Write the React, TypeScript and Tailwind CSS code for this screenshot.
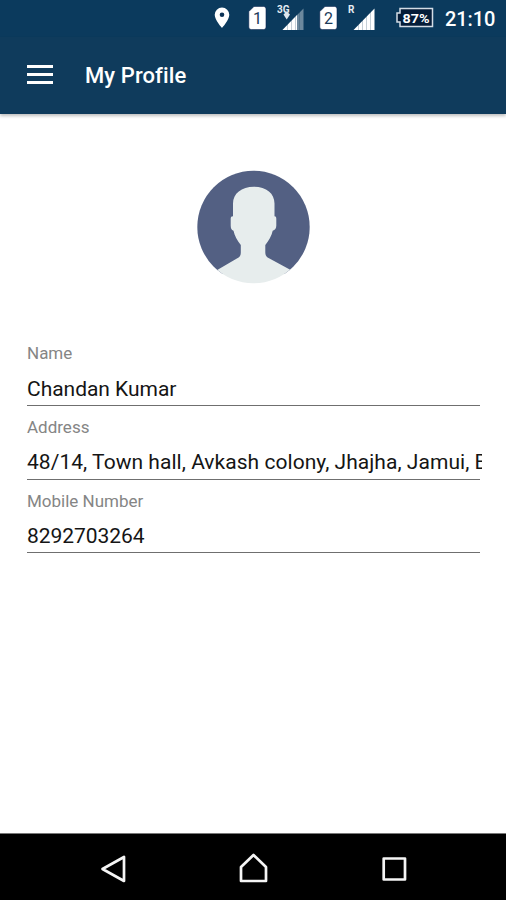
import clsx from "clsx";

const fields = [
  {
    label: "Name",
    value: "Chandan Kumar",
    spacing: "tracking-[-0.03px]",
  },
  {
    label: "Address",
    value: "48/14, Town hall, Avkash colony, Jhajha, Jamui, Bihar",
    spacing: "tracking-[0.04px]",
  },
  {
    label: "Mobile Number",
    value: "8292703264",
    spacing: "tracking-[-0.05px]",
  },
];

function SimIcon({ slot }: { slot: number }) {
  return (
    <svg width="19" height="24" viewBox="0 0 19 24" className="shrink-0">
      <path d="M6 .4h9.500a2.500 2.500 0 0 1 2.500 2.500v18.200a2.500 2.500 0 0 1-2.500 2.500H3.300A2.500 2.500 0 0 1 .8 21.100V5.600z" fill="#fff" stroke="#0b2450" strokeWidth="0.6" />
      <text x="9.500" y="18" textAnchor="middle" fontSize="16" fill="#1c3a58" className="font-[Roboto]">
        {slot}
      </text>
    </svg>
  );
}

function Signal({ network }: { network: string }) {
  const is3g = network === "3G";
  return (
    <svg width="28" height="28" viewBox="0 0 28 28" className="shrink-0">
      <path d="M5.500 26L26.500 4.500V26z" fill="#fff" fillOpacity={is3g ? 0.4 : 1} />
      {is3g && <path d="M5.500 26L20 11V26z" fill="#fff" />}
      <path d="M10.500 20v6M14.500 16v10M18.500 12v14M22.500 8v18" stroke="#0f3b5c" strokeOpacity="0.35" strokeWidth="0.7" />
      <text x="0" y="8.500" fontSize="10" fontWeight="700" fill="#e6edf3" className="font-[Roboto]">
        {network}
      </text>
      {is3g && <path d="M6.500 10.500l3.200-3 3.300 3-3.300 5z" fill="#dfe7ee" />}
    </svg>
  );
}

function StatusBar() {
  return (
    <div className="flex h-[37px] items-start bg-[#0b3a5d] text-white">
      <svg width="16" height="22" viewBox="0 0 16 22" className="mt-[7px] ml-[214px] shrink-0">
        <path d="M8 .5A7.300 7.300 0 0 0 .7 7.800C.7 13 8 21 8 21s7.300-8 7.300-13.200A7.300 7.300 0 0 0 8 .5z" fill="#fff" />
        <circle cx="8" cy="7.800" r="2.300" fill="#0b3155" />
      </svg>
      <div className="mt-1.5 ml-[18px]"><SimIcon slot={1} /></div>
      <div className="mt-1 ml-[10px]"><Signal network="3G" /></div>
      <div className="mt-1.5 ml-[14px]"><SimIcon slot={2} /></div>
      <div className="mt-1 ml-[10px]"><Signal network="R" /></div>
      <svg width="39" height="21" viewBox="0 0 39 21" className="mt-[7px] ml-[19px] shrink-0">
        <path d="M5 1.500H37.500v18H5v-4.500H2v-9h3z" fill="#041c38" stroke="#d3dce5" strokeWidth="1.500" />
        <text x="21" y="15.500" textAnchor="middle" fontSize="13.500" fontWeight="700" fill="#fff" textLength="27" lengthAdjust="spacingAndGlyphs" className="font-[Roboto]">
          87%
        </text>
      </svg>
      <span className="mt-[7px] ml-[11px] text-[20px] leading-6 font-medium tracking-[-0.1px]">21:10</span>
    </div>
  );
}

function Avatar() {
  return (
    <svg width="114" height="114" viewBox="0 0 114 114" className="mx-auto block">
      <defs>
        <clipPath id="avatar">
          <circle cx="57.500" cy="57" r="56.200" />
        </clipPath>
      </defs>
      <g clipPath="url(#avatar)">
        <rect width="114" height="104" fill="#536083" />
        <path
          d="M58 16.700C45.500 16.700 37 23.500 37 33.500v12.800c-1.600 0-2.300.8-2.300 2.500v6.700c0 3 .8 4.700 2.800 5.200 1 5 4 10.300 7.300 14.300v7.800c0 2.600-1 4.200-3.500 5.500L22.500 99.200 0 112v2h114v-2L93.300 99.200 73 88.300c-2.500-1.400-3.700-3.100-3.700-5.500V75c3.300-4 6.400-9.300 7.400-14.300 2.300-.5 3.600-2.200 3.600-5.200v-6.700c0-1.700-.5-2.500-1.800-2.500V33.500c0-10-8-16.800-20.500-16.800z"
          fill="#e7eded"
        />
      </g>
    </svg>
  );
}

export default function App() {
  return (
    <div className="flex h-[900px] w-[506px] flex-col overflow-hidden bg-white font-[Roboto,sans-serif]">
      <StatusBar />

      <header className="flex h-[77px] shrink-0 items-center bg-[#0f3b5c] shadow-[0_2px_3px_rgba(0,0,0,0.25)]">
        <div className="-mt-0.5 ml-[27px] flex w-[26px] flex-col gap-[5px]">
          <span className="h-[3px] bg-white" />
          <span className="h-[3px] bg-white" />
          <span className="h-[3px] bg-white" />
        </div>
        <h1 className="ml-8 text-[22px] leading-7 font-medium tracking-[0.1px] text-white">My Profile</h1>
      </header>

      <main className="flex-1 pt-14">
        <Avatar />
        <div className="mt-[57px] pl-[27px]">
          {fields.map((field) => (
            <div key={field.label} className="h-[73.75px]">
              <div className="h-[25px] pt-[2px] text-[17px] leading-5 text-[#858585]">{field.label}</div>
              <div className={clsx("mt-[9.7px] h-[29.3px] w-[455px] overflow-hidden text-[21px] leading-[26px] whitespace-nowrap text-[#151515]", field.spacing)}>
                {field.value}
              </div>
              <div className="h-px w-[453px] bg-[#6f6f6f]" />
            </div>
          ))}
        </div>
      </main>

      <nav className="flex h-[67px] shrink-0 items-start border-t border-[#777] bg-black">
        <svg width="506" height="66" viewBox="0 0 506 66" fill="none" stroke="#f5f5f5" strokeWidth="2.700" strokeLinejoin="round">
          <path d="M102.500 35L124 23v24z" />
          <path d="M241 33L253.500 21 266 33v14h-25z" />
          <path d="M383.700 24.500h21.300v21h-21.300z" />
        </svg>
      </nav>
    </div>
  );
}
